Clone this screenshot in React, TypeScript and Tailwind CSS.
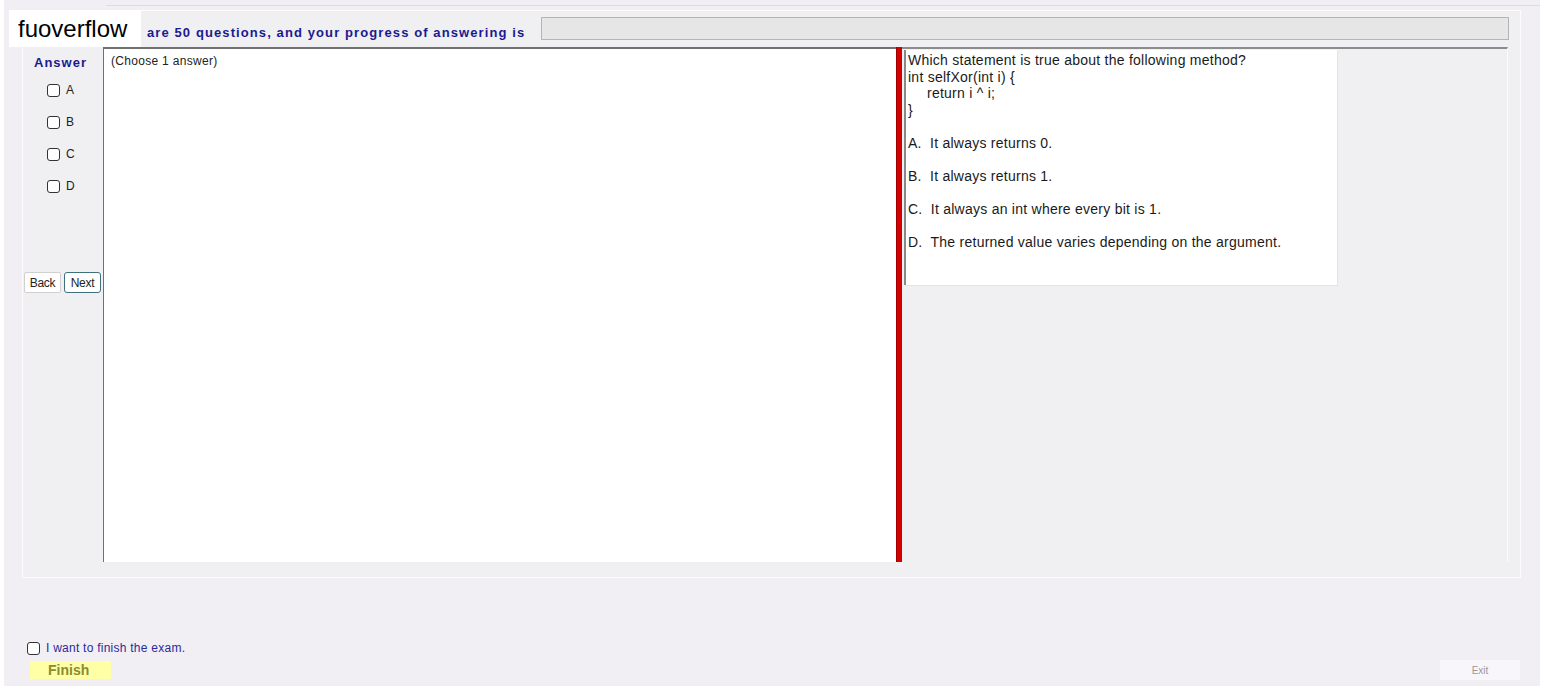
import React from "react";

const options = [
  "A.  It always returns 0.",
  "B.  It always returns 1.",
  "C.  It always an int where every bit is 1.",
  "D.  The returned value varies depending on the argument.",
];

const Box = () => (
  <span className="inline-block w-[13px] h-[13px] border border-[#333] rounded-[3px] bg-white" />
);

const App = () => {
  return (
    <div className="w-[1542px] h-[690px] bg-white font-['Liberation_Sans',Arial,sans-serif] overflow-hidden">
      <div className="relative ml-[4px] w-[1536px] h-[686px] bg-[#f1eff3]">
        {/* top strip */}
        <div className="h-[6px] ml-[102px] border-b border-[#dcdbe0]" />

        {/* logo */}
        <div className="absolute left-[5px] top-[10px] w-[132px] h-[37px] bg-white flex items-center pl-[9px] text-[24px] text-black leading-none">
          fuoverflow
        </div>

        {/* main panel */}
        <div className="mt-[4px] ml-[18px] w-[1499px] h-[568px] border border-[#fcfcfd] bg-[#f0eff2] flex flex-col">
          {/* heading row */}
          <div className="h-[36px] flex items-start">
            <div className="ml-[124px] mt-[14px] text-[13px] leading-[15px] font-bold tracking-[1.1px] text-[#1a1a90] whitespace-nowrap">
              are 50 questions, and your progress of answering is
            </div>
            <div className="ml-4 mr-[11px] mt-[6px] h-[23px] flex-1 bg-[#e6e6e6] border border-[#b4b4b4]" />
          </div>

          {/* content row */}
          <div className="flex h-[515px]">
            {/* answer column */}
            <div className="w-[80px] flex flex-col">
              <div className="mt-[8px] ml-[11px] text-[13px] leading-[15px] font-bold tracking-[1px] text-[#1a1a90]">Answer</div>
              <div className="mt-[12px] flex flex-col gap-[16px] ml-[24px]">
                {["A", "B", "C", "D"].map((l) => (
                  <div key={l} className="h-[16px] flex items-center gap-[6px] text-[12px] text-[#222]">
                    <Box />
                    <span>{l}</span>
                  </div>
                ))}
              </div>
              <div className="mt-[78px] ml-[1px] flex gap-[3px]">
                <button className="w-[37px] h-[21px] bg-white border border-[#d0d0d0] rounded-[2px] text-[12px] text-[#222] tracking-[-0.3px]">
                  Back
                </button>
                <button className="w-[37px] h-[21px] bg-white border border-[#3f6f80] rounded-[3px] text-[12px] text-[#222] tracking-[-0.3px]">
                  Next
                </button>
              </div>
            </div>

            {/* white answer pane */}
            <div className="w-[793px] bg-white border-l border-t-2 border-[#707070]">
              <div className="pl-[7px] pt-[3px] text-[12px] text-[#222] tracking-[0.3px]">(Choose 1 answer)</div>
            </div>

            {/* splitter */}
            <div className="w-[6px] bg-[#d40000] border-l border-[#a00000]" />

            {/* question pane */}
            <div className="w-[606px] border-t-2 border-[#8c8c8c] border-r border-r-[#fbfbfc]">
              <div className="ml-[2px] mt-[1px] w-[433px] h-[235px] bg-white border-l-2 border-[#8a8a8a] shadow-[1px_1px_0_#e4e2e8] pl-[2px] pt-[2px] text-[14px] leading-[16.5px] tracking-[0.25px] text-[#1a1a1a]">
                <div>Which statement is true about the following method?</div>
                <div>int selfXor(int i) {"{"}</div>
                <div className="pl-[19px]">return i ^ i;</div>
                <div>{"}"}</div>
                {options.map((o) => (
                  <div key={o} className="mt-[16.5px] whitespace-pre">
                    {o}
                  </div>
                ))}
              </div>
            </div>
          </div>
        </div>

        {/* bottom */}
        <div className="mt-[61px] ml-[23px] flex items-center gap-[6px]">
          <Box />
          <span className="text-[12px] text-[#2a2a9c] tracking-[0.25px]">I want to finish the exam.</span>
        </div>
        <div className="flex items-start justify-between mt-[4px]">
          <div className="ml-[26px] w-[81px] h-[18px] bg-[#ffffa6] flex items-center pl-[18px] text-[14px] font-bold text-[#8b8b30]">
            Finish
          </div>
          <div className="mr-[20px] -mt-[1px] w-[80px] h-[20px] bg-[#f9f6f9] flex items-center justify-center text-[10px] text-[#999]">
            Exit
          </div>
        </div>
      </div>
    </div>
  );
};

export default App;
